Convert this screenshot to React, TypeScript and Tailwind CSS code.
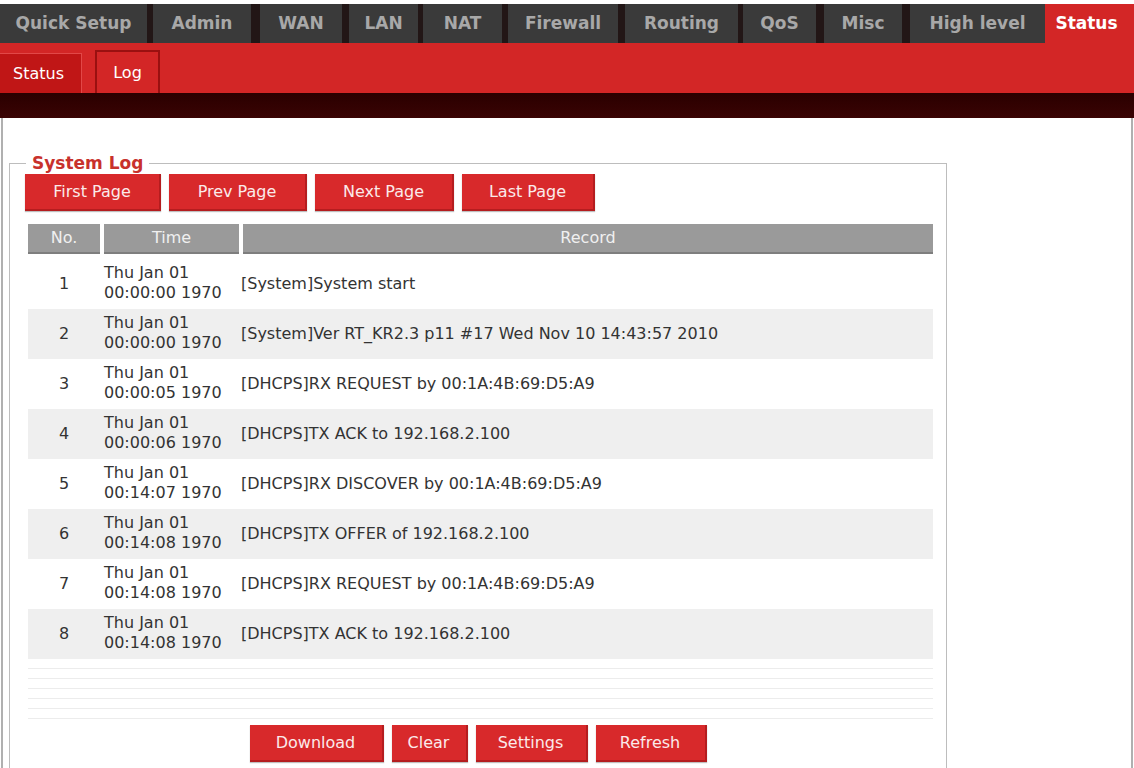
import React from "react";

const topTabs: Array<{ label: string; w: string; ml: string }> = [
  { label: "Quick Setup", w: "w-[147px]", ml: "ml-0" },
  { label: "Admin", w: "w-[98px]", ml: "ml-[6px]" },
  { label: "WAN", w: "w-[82px]", ml: "ml-[9px]" },
  { label: "LAN", w: "w-[69px]", ml: "ml-[7px]" },
  { label: "NAT", w: "w-[79px]", ml: "ml-[5px]" },
  { label: "Firewall", w: "w-[110px]", ml: "ml-[6px]" },
  { label: "Routing", w: "w-[113px]", ml: "ml-[7px]" },
  { label: "QoS", w: "w-[73px]", ml: "ml-[5px]" },
  { label: "Misc", w: "w-[78px]", ml: "ml-[8px]" },
  { label: "High level", w: "w-[135px]", ml: "ml-[8px]" },
];

const logs = [
  { no: 1, date: "00:00:00 1970", rec: "[System]System start" },
  { no: 2, date: "00:00:00 1970", rec: "[System]Ver RT_KR2.3 p11 #17 Wed Nov 10 14:43:57 2010" },
  { no: 3, date: "00:00:05 1970", rec: "[DHCPS]RX REQUEST by 00:1A:4B:69:D5:A9" },
  { no: 4, date: "00:00:06 1970", rec: "[DHCPS]TX ACK to 192.168.2.100" },
  { no: 5, date: "00:14:07 1970", rec: "[DHCPS]RX DISCOVER by 00:1A:4B:69:D5:A9" },
  { no: 6, date: "00:14:08 1970", rec: "[DHCPS]TX OFFER of 192.168.2.100" },
  { no: 7, date: "00:14:08 1970", rec: "[DHCPS]RX REQUEST by 00:1A:4B:69:D5:A9" },
  { no: 8, date: "00:14:08 1970", rec: "[DHCPS]TX ACK to 192.168.2.100" },
];

const RedButton = ({ label, w }: { label: string; w: string }) => (
  <button
    className={`${w} h-[37px] bg-[#d8292b] text-[#fbeaea] text-[16px] border-b-2 border-r-2 border-[#b51d1f] shadow-[0_1px_1px_rgba(0,0,0,0.25)]`}
  >
    {label}
  </button>
);

export default function App() {
  return (
    <div className="w-[1134px] h-[768px] overflow-hidden bg-white font-['DejaVu_Sans',sans-serif] text-[#333]">
      {/* main menu */}
      <div className="pt-[4px] bg-white">
        <div className="flex h-[39px] bg-[#221616]">
          {topTabs.map((t) => (
            <div
              key={t.label}
              className={`${t.w} ${t.ml} flex items-center justify-center bg-[#3a3a3a] text-[#a8a8a8] text-[17px] font-bold`}
            >
              {t.label}
            </div>
          ))}
          <div className="flex-1 flex items-center justify-center bg-[#d32626] text-white text-[17px] font-bold pr-[6px]">
            Status
          </div>
        </div>
      </div>

      {/* sub menu */}
      <div className="flex items-end h-[50px] bg-[#d32626]">
        <div className="w-[82px] h-[40px] flex items-center pl-[13px] bg-[#c01616] border-t border-r border-[#e24848] text-white text-[16px]">
          Status
        </div>
        <div className="ml-[13px] w-[65px] h-[43px] flex items-center justify-center bg-[#d32626] border-2 border-b-0 border-[#9a1010] text-white text-[16px]">
          Log
        </div>
      </div>
      <div className="h-[25px] bg-gradient-to-b from-[#2a0000] to-[#3a0404]" />

      {/* content */}
      <div className="h-[650px] border-l-2 border-r-2 border-[#b0b0b0] mx-[1px] pt-[35px]">
        <fieldset className="ml-[6px] w-[938px] border border-[#bdbdbd] pb-[20px]">
          <legend className="ml-[16px] px-[6px] text-[17px] leading-[20px] font-bold text-[#c8312c]">
            System Log
          </legend>
          <div className="flex gap-[8px] pl-[15px] mt-[1px]">
            <RedButton label="First Page" w="w-[136px]" />
            <RedButton label="Prev Page" w="w-[138px]" />
            <RedButton label="Next Page" w="w-[139px]" />
            <RedButton label="Last Page" w="w-[133px]" />
          </div>

          <div className="ml-[18px] w-[905px] mt-[13px]">
            <div className="flex gap-[4px] h-[30px] text-[16px] text-[#f0f0f0]">
              <div className="w-[72px] bg-[#9a9a9a] flex items-center justify-center border-b-2 border-[#7e7e7e]">No.</div>
              <div className="w-[135px] bg-[#9a9a9a] flex items-center justify-center border-b-2 border-[#7e7e7e]">Time</div>
              <div className="flex-1 bg-[#9a9a9a] flex items-center justify-center border-b-2 border-[#7e7e7e]">Record</div>
            </div>
            <div className="mt-[5px]">
              {logs.map((l) => (
                <div
                  key={l.no}
                  className={`flex h-[50px] items-center text-[16px] leading-[20px] ${
                    l.no % 2 === 0 ? "bg-[#efefef]" : "bg-white"
                  }`}
                >
                  <div className="w-[72px] text-center">{l.no}</div>
                  <div className="w-[139px] pl-[4px] -mt-[2px]">
                    <div>Thu Jan 01</div>
                    <div>{l.date}</div>
                  </div>
                  <div className="flex-1 pl-[2px]">{l.rec}</div>
                </div>
              ))}
              <div className="h-[9px]" />
              {[0, 1, 2, 3, 4].map((i) => (
                <div key={i} className="h-[10px] border-t border-[#ececec]" />
              ))}
              <div className="h-[1px] border-t border-[#ececec]" />
            </div>
          </div>

          <div className="flex justify-center gap-[8px] mt-[6px]">
            <RedButton label="Download" w="w-[134px]" />
            <RedButton label="Clear" w="w-[76px]" />
            <RedButton label="Settings" w="w-[112px]" />
            <RedButton label="Refresh" w="w-[111px]" />
          </div>
        </fieldset>
      </div>
    </div>
  );
}
